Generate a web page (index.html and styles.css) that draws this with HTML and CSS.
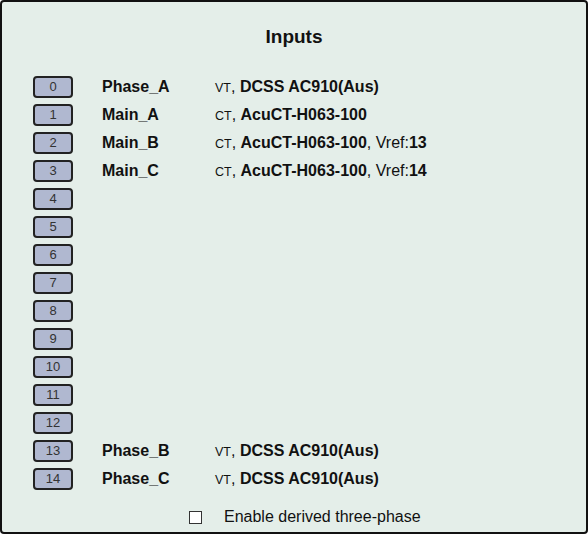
FILE: index.html
```html
<!DOCTYPE html>
<html lang="en">
<head>
    <meta charset="UTF-8">
    <title>Inputs</title>
    <link rel="stylesheet" href="styles.css">
</head>
<body>

<div class="panel">
    <h2 class="panel-title">Inputs</h2>

    <div class="input-list">
        <div class="input-row">
            <span class="badge">0</span>
            <span class="input-name">Phase_A</span>
            <span class="input-desc"><span class="kind">vt</span>, <b>DCSS AC910(Aus)</b></span>
        </div>
        <div class="input-row">
            <span class="badge">1</span>
            <span class="input-name">Main_A</span>
            <span class="input-desc"><span class="kind">ct</span>, <b>AcuCT-H063-100</b></span>
        </div>
        <div class="input-row">
            <span class="badge">2</span>
            <span class="input-name">Main_B</span>
            <span class="input-desc"><span class="kind">ct</span>, <b>AcuCT-H063-100</b>, Vref:<b>13</b></span>
        </div>
        <div class="input-row">
            <span class="badge">3</span>
            <span class="input-name">Main_C</span>
            <span class="input-desc"><span class="kind">ct</span>, <b>AcuCT-H063-100</b>, Vref:<b>14</b></span>
        </div>
        <div class="input-row"><span class="badge">4</span></div>
        <div class="input-row"><span class="badge">5</span></div>
        <div class="input-row"><span class="badge">6</span></div>
        <div class="input-row"><span class="badge">7</span></div>
        <div class="input-row"><span class="badge">8</span></div>
        <div class="input-row"><span class="badge">9</span></div>
        <div class="input-row"><span class="badge">10</span></div>
        <div class="input-row"><span class="badge">11</span></div>
        <div class="input-row"><span class="badge">12</span></div>
        <div class="input-row">
            <span class="badge">13</span>
            <span class="input-name">Phase_B</span>
            <span class="input-desc"><span class="kind">vt</span>, <b>DCSS AC910(Aus)</b></span>
        </div>
        <div class="input-row">
            <span class="badge">14</span>
            <span class="input-name">Phase_C</span>
            <span class="input-desc"><span class="kind">vt</span>, <b>DCSS AC910(Aus)</b></span>
        </div>
    </div>

    <label class="derived">
        <input type="checkbox" id="derived" />
        <span>Enable derived three-phase</span>
    </label>
</div>

</body>
</html>
```

FILE: styles.css
```css
body {
    margin: 0;
    font-family: "Liberation Sans", Arial, sans-serif;
}

.panel {
    box-sizing: border-box;
    width: 588px;
    height: 534px;
    border: 2px solid #111;
    border-radius: 4px;
    background: #e4eee9;
    color: #111;
    padding: 23px 0 0 31px;
}

.panel-title {
    margin: 0 0 0 -31px;
    font-size: 19px;
    line-height: 24px;
    text-align: center;
}

.input-list {
    margin-top: 24px;
}

.input-row {
    display: grid;
    grid-template-columns: 69px 113px auto;
    align-items: center;
    height: 28px;
    font-size: 16px;
}

.badge {
    box-sizing: border-box;
    width: 40px;
    height: 22px;
    border: 2px solid #222;
    border-radius: 4px;
    background: #b0b8d0;
    color: #333;
    font-size: 13px;
    text-align: center;
    line-height: 18px;
}

.input-name {
    font-weight: bold;
}

.kind {
    text-transform: uppercase;
    font-size: 12.5px;
}

.derived {
    display: flex;
    align-items: center;
    margin: 15px 0 0 156px;
    font-size: 16px;
}

.derived input {
    appearance: none;
    box-sizing: border-box;
    margin: 0 22px 0 0;
    width: 13px;
    height: 13px;
    border: 1px solid #333;
    background: #fff;
}
```
